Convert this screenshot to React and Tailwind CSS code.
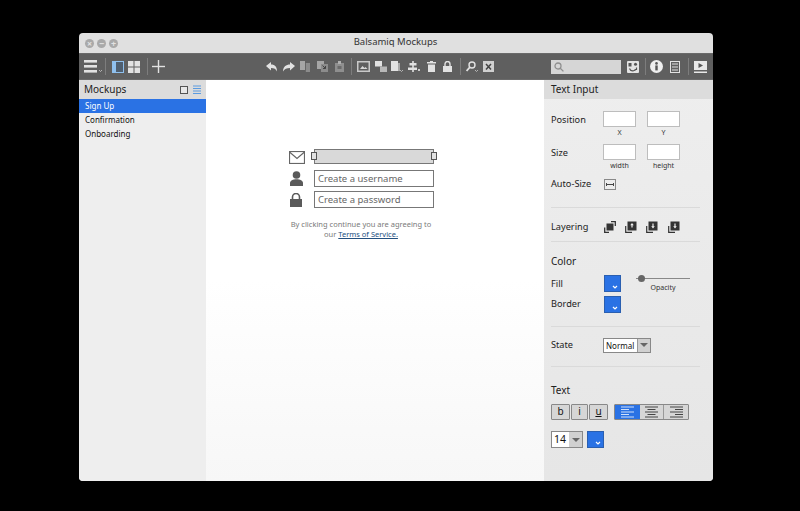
import React from "react";

function Sep({ className = "" }) {
  return <div className={`w-px h-[17px] bg-[#7d7d7d] shrink-0 ${className}`} />;
}

function Tool({ w = 12, h = 12, className = "", children }) {
  return (
    <svg width={w} height={h} viewBox={`0 0 ${w} ${h}`} className={`shrink-0 ${className}`} fill="#e2e2e2">
      {children}
    </svg>
  );
}

function Chevron({ x = 0, y = 0, stroke = "#ccc" }) {
  return <path d={`M${x} ${y}l1.500 1.500 1.500-1.500`} fill="none" stroke={stroke} strokeWidth="0.800" />;
}

function Swatch({ className = "" }) {
  return (
    <div className={`w-[17px] h-[17px] bg-[#2a72e4] border border-[#2a5fb0] flex items-end justify-end p-[2px] ${className}`}>
      <svg width="6" height="4" viewBox="0 0 6 4"><path d="M1 1l2 2 2-2" fill="none" stroke="#fff" strokeWidth="1.200" /></svg>
    </div>
  );
}

function Field({ label }) {
  return (
    <div className="w-[33px] flex flex-col items-center">
      <div className="w-[33px] h-[16px] bg-white border border-[#bdbdbd]" />
      <span className="text-[7px] leading-[9px] mt-px text-[#333]">{label}</span>
    </div>
  );
}

function Divider({ className = "" }) {
  return <div className={`h-px w-[149px] bg-[#dadada] ${className}`} />;
}

function LayerIcon({ kind }) {
  if (kind === "front") {
    return (
      <svg width="12" height="12" viewBox="0 0 12 12" className="shrink-0">
        <path d="M7 0.700h4.300V5M0.700 6.500v4.800H5" fill="none" stroke="#333" strokeWidth="1.300" />
        <rect x="2.500" y="2.500" width="7" height="7" fill="#333" />
      </svg>
    );
  }
  return (
    <svg width="12" height="12" viewBox="0 0 12 12" className="shrink-0">
      <path d="M0.700 5v6.300H7" fill="none" stroke="#333" strokeWidth="1.200" />
      <rect x="2.500" y="0.500" width="9" height="9" fill="#333" />
      {kind === "up" && <path d="M7 2L5.200 4.300h1.200v2.200h1.200V4.300h1.200z" fill="#eee" />}
      {kind !== "up" && <path d="M7 7.500L5.200 5.200h1.200V2.500h1.200v2.700h1.200z" fill="#eee" />}
    </svg>
  );
}

function AlignIcon({ align, color }) {
  const rows = align === "left" ? ["M0 1h13", "M0 3.500h8", "M0 6h13", "M0 8.500h8", "M0 11h13"]
    : align === "center" ? ["M0 1h13", "M2.500 3.500h8", "M0 6h13", "M2.500 8.500h8", "M0 11h13"]
    : ["M0 1h13", "M5 3.500h8", "M0 6h13", "M5 8.500h8", "M0 11h13"];
  return (
    <svg width="13" height="12" viewBox="0 0 13 12" fill="none" stroke={color} strokeWidth="1">
      {rows.map((d) => <path key={d} d={d} />)}
    </svg>
  );
}

function Toolbar() {
  return (
    <div className="h-[27px] bg-[#5f5f5f] border-y border-[#6a6a6a] flex items-center pl-[5px] shrink-0">
      {/* left group */}
      <Tool w={19} h={13}>
        <rect x="0" y="0" width="13" height="2.600" />
        <rect x="0" y="5" width="13" height="2.600" />
        <rect x="0" y="10" width="13" height="2.600" />
        <Chevron x={15} y={10} />
      </Tool>
      <Sep className="ml-[2px]" />
      <Tool w={12} h={12} className="ml-[6px]">
        <rect x="0" y="0" width="12" height="12" fill="#8fc0ee" />
        <rect x="4" y="1" width="7" height="10" fill="#4f5f70" />
      </Tool>
      <Tool w={12} h={12} className="ml-[4px]">
        <rect x="0" y="0" width="5.500" height="5.500" />
        <rect x="6.500" y="0" width="5.500" height="5.500" />
        <rect x="0" y="6.500" width="5.500" height="5.500" />
        <rect x="6.500" y="6.500" width="5.500" height="5.500" />
      </Tool>
      <Sep className="ml-[7px]" />
      <Tool w={13} h={13} className="ml-[4px]">
        <rect x="0" y="5.800" width="13" height="1.400" />
        <rect x="5.800" y="0" width="1.400" height="13" />
      </Tool>

      {/* edit group */}
      <Tool w={11} h={10} className="ml-[101px]">
        <path d="M0 4L5 0v2.500c4 0 6 2.500 6 7-1-2.500-3-3.500-6-3.500v2.500z" />
      </Tool>
      <Tool w={12} h={10} className="ml-[6px]">
        <path d="M12 4L7 0v2.500c-4 0-7 2.500-7 7 1-2.500 4-3.500 7-3.500v2.500z" />
      </Tool>
      <Tool w={10} h={11} className="ml-[5px]">
        <path d="M0 0h5v9H0z" fill="#a6a6a6" />
        <path d="M5.800 2h4.200v9H5.800z" fill="#8c8c8c" />
      </Tool>
      <Tool w={11} h={11} className="ml-[7px]">
        <path d="M0 0h7v8H0z" fill="#a6a6a6" />
        <path d="M4 3h7v8H4z" fill="#8c8c8c" />
        <path d="M5.500 4.500l3 3M8.500 5v2.500H6" fill="none" stroke="#444" />
      </Tool>
      <Tool w={9} h={11} className="ml-[7px]">
        <path d="M0 2h9v9H0z" fill="#8f8f8f" />
        <path d="M3 0h3v3H3z" fill="#b0b0b0" />
        <path d="M2.500 5h4v3h-4z" fill="#6b6b6b" />
      </Tool>
      <Sep className="ml-[7px]" />
      <Tool w={13} h={11} className="ml-[5px]">
        <path d="M0 0h13v11H0z" fill="#c9c9c9" />
        <path d="M1.500 1.500h10v8h-10z" fill="#5f5f5f" />
        <path d="M3 8l2.500-3 2 2 1-1 2 2z" fill="#d8d8d8" />
      </Tool>
      <Tool w={12} h={11} className="ml-[5px]">
        <path d="M0 0h7v5.500H0z" />
        <path d="M5 5.500h7V11H5z" fill="#b8b8b8" />
      </Tool>
      <Tool w={12} h={12} className="ml-[4px]">
        <path d="M0 0h7v10H0z" />
        <path d="M7 2h2v8H7z" fill="#a8a8a8" />
        <Chevron x={9} y={9} />
      </Tool>
      <Tool w={12} h={11} className="ml-[5px]">
        <path d="M4.200 0h1.600v11H4.200z" />
        <path d="M1.500 2h7v2.500h-7zM0 6.500h9V9H0z" />
        <rect x="10" y="8" width="2" height="2" fill="#ccc" />
      </Tool>
      <Tool w={9} h={11} className="ml-[7px]">
        <path d="M3 0h3v1h3v1.400H0V1h3zM1 3.400h7V11H1z" />
      </Tool>
      <Tool w={9} h={11} className="ml-[7px]">
        <path d="M0 5h9v6H0z" />
        <path d="M2 5V3a2.500 2.500 0 0 1 5 0v2" fill="none" stroke="#e2e2e2" strokeWidth="1.400" />
      </Tool>
      <Sep className="ml-[8px]" />
      <Tool w={12} h={11} className="ml-[5px]">
        <circle cx="6" cy="4" r="3" fill="none" stroke="#e2e2e2" strokeWidth="1.400" />
        <path d="M4 6l-3.400 4" stroke="#e2e2e2" strokeWidth="1.800" />
        <Chevron x={9} y={9} />
      </Tool>
      <Tool w={11} h={11} className="ml-[5px]">
        <path d="M0 0h11v11H0z" fill="#d0d0d0" />
        <path d="M3 3l5 5.500M8 3L3 8.500" stroke="#444" strokeWidth="1.500" />
      </Tool>

      {/* search and right group */}
      <div className="ml-[57px] w-[70px] h-[14px] bg-[#d6d6d6] flex items-center pl-[3px] shrink-0">
        <svg width="10" height="10" viewBox="0 0 10 10" fill="none" stroke="#8f8f8f" strokeWidth="1.300">
          <circle cx="4" cy="4" r="3" />
          <path d="M6 6l3.400 3.400" />
        </svg>
      </div>
      <Tool w={12} h={12} className="ml-[6px]">
        <rect width="12" height="12" rx="1" fill="#e4e4e4" />
        <rect x="1.500" y="2" width="3" height="3.500" fill="#555" />
        <circle cx="8.500" cy="3.200" r="1.500" fill="#555" />
        <path d="M2.500 7.500c1 3 5 3.200 7 .5M9.500 6.500V8.500H7.500" stroke="#555" strokeWidth="1.200" fill="none" />
      </Tool>
      <Sep className="ml-[6px]" />
      <Tool w={13} h={13} className="ml-[4px]">
        <circle cx="6.500" cy="6.500" r="6.500" fill="#efefef" />
        <rect x="5.300" y="5.400" width="2.400" height="5" fill="#555" />
        <circle cx="6.500" cy="3.400" r="1.300" fill="#555" />
      </Tool>
      <Tool w={10} h={12} className="ml-[7px]">
        <rect x="0.500" y="0.500" width="9" height="11" fill="none" stroke="#e2e2e2" />
        <path d="M2 3h6M2 6h6M2 9h6" stroke="#e2e2e2" strokeWidth="1.200" />
      </Tool>
      <Sep className="ml-[8px]" />
      <Tool w={13} h={12} className="ml-[5px]">
        <rect width="13" height="9" fill="#e8e8e8" />
        <path d="M4.500 2l4.500 2.500L4.500 7z" fill="#555" />
        <rect y="10.500" width="13" height="1.500" fill="#e8e8e8" />
      </Tool>
    </div>
  );
}

function MockupsPanel() {
  return (
    <div className="w-[127px] bg-[#eeeeee] shrink-0">
      <div className="h-[19px] bg-[#dcdcdc] flex items-center pl-[5px] pr-[5px]">
        <span className="text-[10px] text-[#222] flex-1 -mt-px">Mockups</span>
        <div className="w-[8px] h-[8px] border border-[#555] bg-[#e8e8e8]" />
        <svg width="8" height="9" viewBox="0 0 8 9" className="ml-[5px]" stroke="#5b9be0">
          <path d="M0 1h8M0 3.500h8M0 6h8M0 8.500h8" />
        </svg>
      </div>
      <div className="h-[14px] bg-[#2a72e4] text-white text-[8px] leading-[14px] pl-[6px]">Sign Up</div>
      <div className="h-[14px] text-[#111] text-[8px] leading-[14px] pl-[6px]">Confirmation</div>
      <div className="h-[14px] text-[#111] text-[8px] leading-[14px] pl-[6px]">Onboarding</div>
    </div>
  );
}

function Canvas() {
  return (
    <div className="w-[338px] shrink-0 bg-gradient-to-b from-white from-50% to-[#f7f7f7] pl-[82px] pt-[69px]">
      <div className="flex items-center h-[15px]">
        <svg width="16" height="13" viewBox="0 0 16 13" fill="none" stroke="#666" strokeWidth="1.200" className="ml-px mt-[2px]">
          <rect x="0.500" y="0.500" width="15" height="12" />
          <path d="M0.500 1l7.500 6.500L15.500 1" />
        </svg>
        <div className="relative ml-[9px] w-[120px] h-[15px] bg-[#d9d9d9] border border-[#777]">
          <div className="absolute -left-[4px] top-[2px] w-[6px] h-[8px] border border-[#555] bg-[#e2e2e2]" />
          <div className="absolute -right-[4px] top-[2px] w-[6px] h-[8px] border border-[#555] bg-[#e2e2e2]" />
        </div>
      </div>
      <div className="flex items-center mt-[6px] h-[17px]">
        <svg width="13" height="15" viewBox="0 0 13 15" fill="#5a5a5a" className="ml-[2px]">
          <circle cx="6.500" cy="4" r="3.800" />
          <path d="M0 15v-3c0-2.500 3-3.800 6.500-3.800S13 9.500 13 12v3z" />
        </svg>
        <div className="ml-[11px] w-[120px] h-[17px] border border-[#777] bg-white text-[9.500px] leading-[15px] pl-[3px] text-[#666]">Create a username</div>
      </div>
      <div className="flex items-center mt-[4px] h-[17px]">
        <svg width="12" height="14" viewBox="0 0 12 14" fill="#5a5a5a" className="ml-[2px]">
          <path d="M0 6h12v8H0z" />
          <path d="M2.500 6V4a3.500 3.500 0 0 1 7 0v2" fill="none" stroke="#5a5a5a" strokeWidth="1.600" />
        </svg>
        <div className="ml-[12px] w-[120px] h-[17px] border border-[#777] bg-white text-[9.500px] leading-[15px] pl-[3px] text-[#666]">Create a password</div>
      </div>
      <div className="w-[146px] mt-[11px] text-center text-[7.500px] leading-[10px] text-[#7a7a7a] whitespace-nowrap">
        By clicking continue you are agreeing to
        <br />
        our <span className="text-[#24507f] underline">Terms of Service.</span>
      </div>
    </div>
  );
}

function PropsPanel() {
  return (
    <div className="w-[169px] bg-gradient-to-b from-[#eeeeee] to-[#e6e6e6] shrink-0 text-[9.200px] text-[#222]">
      <div className="h-[19px] bg-[#dcdcdc] flex items-center pl-[7px] text-[10px] -mb-px">
        <span className="-mt-px">Text Input</span>
      </div>
      <div className="pl-[7px] pt-px">
        <div className="flex mt-[12px] h-[27px]">
          <span className="w-[52px] leading-[16px] pt-px">Position</span>
          <Field label="X" />
          <div className="w-[11px]" />
          <Field label="Y" />
        </div>
        <div className="flex mt-[6px] h-[27px]">
          <span className="w-[52px] leading-[16px] pt-px">Size</span>
          <Field label="width" />
          <div className="w-[11px]" />
          <Field label="height" />
        </div>
        <div className="flex items-center mt-[7px] h-[12px]">
          <span className="w-[53px]">Auto-Size</span>
          <svg width="12" height="11" viewBox="0 0 12 11" fill="none" stroke="#444">
            <rect x="0.500" y="0.500" width="11" height="10" stroke="#888" />
            <path d="M2 5.500h8M2.500 4v3M9.500 4v3" />
          </svg>
        </div>
        <Divider className="mt-[17px]" />
        <div className="flex items-center h-[33px] pt-[5px]">
          <span className="w-[53px] -mt-px">Layering</span>
          <LayerIcon kind="front" />
          <div className="w-[9px]" />
          <LayerIcon kind="up" />
          <div className="w-[9px]" />
          <LayerIcon kind="down" />
          <div className="w-[10px]" />
          <LayerIcon kind="back" />
        </div>
        <Divider />
        <div className="text-[10px] leading-[12px] mt-[13px]">Color</div>
        <div className="flex mt-[2px] h-[44px]">
          <div className="w-[53px] flex flex-col mt-[5px]">
            <span className="h-[20px] leading-[20px]">Fill</span>
            <span className="h-[19px] leading-[20px]">Border</span>
          </div>
          <div className="flex flex-col gap-[4px] mt-[6px]">
            <Swatch />
            <Swatch />
          </div>
          <div className="ml-[15px] mt-[6px] w-[54px] flex flex-col items-center">
            <div className="relative w-[54px] h-[7px]">
              <div className="absolute left-0 right-0 top-[3px] h-px bg-[#888]" />
              <div className="absolute left-[2px] top-0 w-[7px] h-[7px] rounded-full bg-[#666]" />
            </div>
            <span className="text-[7px] leading-[10px] mt-px text-[#333]">Opacity</span>
          </div>
        </div>
        <Divider className="mt-[13px]" />
        <div className="flex items-center mt-[10px] h-[16px]">
          <span className="w-[52px]">State</span>
          <div className="w-[48px] h-[15px] flex border border-[#888] bg-white">
            <span className="flex-1 text-[8px] leading-[13px] pl-[2px] text-[#111]">Normal</span>
            <div className="w-[13px] bg-[#d0d0d0] border-l border-[#999] flex items-center justify-center">
              <div className="border-x-[4px] border-x-transparent border-t-[4px] border-t-[#666]" />
            </div>
          </div>
        </div>
        <Divider className="mt-[13px]" />
        <div className="mt-[17px] text-[10px] leading-[12px]">Text</div>
        <div className="flex mt-[8px] h-[16px]">
          <div className="w-[19px] bg-[#d6d6d6] border border-[#888] rounded-[1px] text-center text-[10px] leading-[13px] text-[#111]">b</div>
          <div className="w-[17px] ml-px bg-[#d6d6d6] border border-[#888] rounded-[1px] text-center text-[10px] leading-[13px] text-[#111]">i</div>
          <div className="w-[19px] ml-px bg-[#d6d6d6] border border-[#888] rounded-[1px] text-center text-[10px] leading-[13px] text-[#111] underline">u</div>
          <div className="ml-[6px] w-[75px] flex border border-[#888] rounded-[1px] bg-[#d6d6d6]">
            <div className="w-[25px] bg-[#2a72e4] flex items-center justify-center"><AlignIcon align="left" color="#cfe0fa" /></div>
            <div className="w-[25px] border-r border-[#999] flex items-center justify-center"><AlignIcon align="center" color="#444" /></div>
            <div className="w-[24px] flex items-center justify-center"><AlignIcon align="right" color="#444" /></div>
          </div>
        </div>
        <div className="flex mt-[11px]">
          <div className="w-[32px] h-[17px] flex border border-[#888] bg-white">
            <span className="flex-1 text-[10.500px] leading-[15px] pl-[2px] text-[#111]">14</span>
            <div className="w-[13px] bg-[#d0d0d0] flex items-center justify-center">
              <div className="border-x-[4px] border-x-transparent border-t-[4px] border-t-[#666]" />
            </div>
          </div>
          <Swatch className="ml-[4px]" />
        </div>
      </div>
    </div>
  );
}

export default function App() {
  return (
    <div className="w-[800px] h-[511px] bg-black pt-[33px] pl-[79px] overflow-hidden font-['Noto_Sans',sans-serif]">
      <div className="w-[634px] h-[448px] rounded-[4px] overflow-hidden flex flex-col bg-[#e0e0e0]">
        <div className="h-[20px] shrink-0 flex items-center px-[6px]">
          <div className="flex gap-[3px]">
            {["×", "−", "+"].map((s) => (
              <span key={s} className="w-[9px] h-[9px] rounded-full bg-[#a9a9a9] text-[#e2e2e2] text-[9px] leading-[9px] text-center font-bold">{s}</span>
            ))}
          </div>
          <span className="flex-1 text-center text-[9.500px] text-[#333] pr-[34px] -mt-px">Balsamiq Mockups</span>
        </div>
        <Toolbar />
        <div className="flex flex-1 min-h-0">
          <MockupsPanel />
          <Canvas />
          <PropsPanel />
        </div>
      </div>
    </div>
  );
}
